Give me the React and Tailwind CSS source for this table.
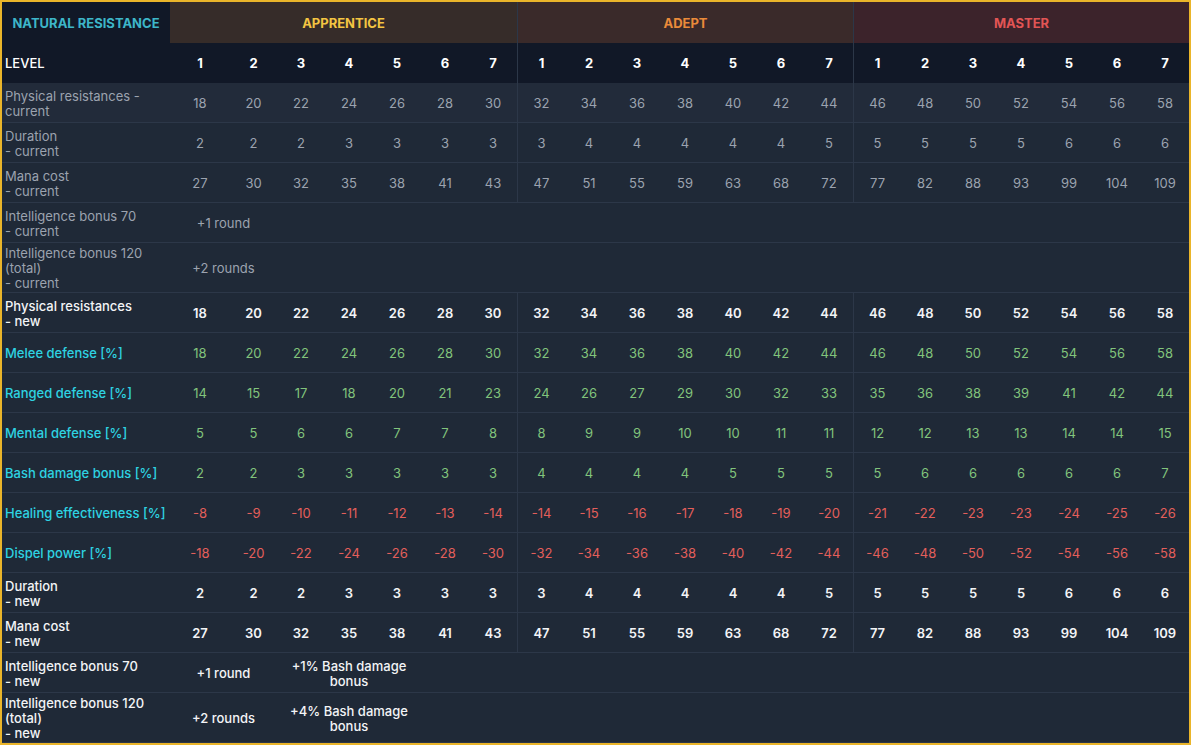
import React from "react";

const phys = [18,20,22,24,26,28,30,32,34,36,38,40,42,44,46,48,50,52,54,56,58];
const dur = [2,2,2,3,3,3,3,3,4,4,4,4,4,5,5,5,5,5,6,6,6];
const mana = [27,30,32,35,38,41,43,47,51,55,59,63,68,72,77,82,88,93,99,104,109];
const ranged = [14,15,17,18,20,21,23,24,26,27,29,30,32,33,35,36,38,39,41,42,44];
const mental = [5,5,6,6,7,7,8,8,9,9,10,10,11,11,12,12,13,13,14,14,15];
const bash = [2,2,3,3,3,3,3,4,4,4,4,5,5,5,5,6,6,6,6,6,7];
const heal = [-8,-9,-10,-11,-12,-13,-14,-14,-15,-16,-17,-18,-19,-20,-21,-22,-23,-23,-24,-25,-26];
const dispel = [-18,-20,-22,-24,-26,-28,-30,-32,-34,-36,-38,-40,-42,-44,-46,-48,-50,-52,-54,-56,-58];

const BORDER = "border-[#2c3748]";

function Label({ lines, color, h, weight, bg }) {
  return (
    <div className={`flex flex-col justify-center pl-[3px] pt-[2px] border-b ${BORDER} ${h} ${color} ${weight} ${bg} leading-[15px]`}>
      {lines.map((l, i) => (
        <span key={i} className="whitespace-nowrap">{l}</span>
      ))}
    </div>
  );
}

function NumRow({ lines, values, labelColor, valueColor, labelWeight, valueWeight, h = "h-[40px]", bg = "bg-[#1f2937]" }) {
  return (
    <>
      <Label lines={lines} color={labelColor} h={h} weight={labelWeight} bg={bg} />
      {values.map((v, i) => (
        <div
          key={i}
          className={`flex items-center justify-center pt-[2px] border-b ${BORDER} ${h} ${bg} ${valueColor} ${valueWeight} ${i === 7 || i === 14 ? `border-l ${BORDER}` : ""}`}
        >
          {v}
        </div>
      ))}
    </>
  );
}

function TextRow({ lines, labelColor, labelWeight, valueColor, valueWeight, a, b, h = "h-[40px]" }) {
  return (
    <>
      <Label lines={lines} color={labelColor} h={h} weight={labelWeight} bg="bg-[#1f2937]" />
      <div className={`col-span-2 flex items-center justify-center text-center pt-[2px] border-b ${BORDER} ${h} bg-[#1f2937] ${valueColor} ${valueWeight} leading-[15px]`}>
        {a}
      </div>
      {b ? (
        <>
          <div className={`col-span-3 flex items-center justify-center text-center px-[8px] pt-[2px] border-b ${BORDER} ${h} bg-[#1f2937] ${valueColor} ${valueWeight} leading-[15px]`}>
            {b}
          </div>
          <div className={`col-span-16 border-b ${BORDER} ${h} bg-[#1f2937]`} />
        </>
      ) : (
        <div className={`col-span-19 border-b ${BORDER} ${h} bg-[#1f2937]`} />
      )}
    </>
  );
}

export default function App() {
  const gray = "text-[#9ca3af]";
  const white = "text-[#f3f4f6]";
  const cyan = "text-[#2ed3e2]";
  const green = "text-[#82c47c]";
  const red = "text-[#e35f5b]";
  const levels = [1,2,3,4,5,6,7,1,2,3,4,5,6,7,1,2,3,4,5,6,7];
  return (
    <div className="w-[1191px] h-[745px] border-2 border-[#eab52a] bg-[#1f2937] overflow-hidden" style={{ fontFamily: "Inter, 'Noto Sans', sans-serif" }}>
      <div className="grid grid-cols-[168px_60px_47px_repeat(19,48px)] text-[13px]">
        {/* header */}
        <div className="h-[41px] pt-[3px] bg-[#111827] flex items-center justify-center font-bold text-[#3db6c9] text-[13px] uppercase">
          Natural Resistance
        </div>
        <div className="col-span-7 h-[41px] pt-[3px] bg-[#362c29] flex items-center justify-center font-bold text-[#f4c542]">APPRENTICE</div>
        <div className={`col-span-7 h-[41px] pt-[3px] bg-[#3a2a2a] flex items-center justify-center font-bold text-[#ea8b3a] border-l ${BORDER}`}>ADEPT</div>
        <div className={`col-span-7 h-[41px] pt-[3px] bg-[#3c232b] flex items-center justify-center font-bold text-[#e25555] border-l ${BORDER}`}>MASTER</div>

        {/* level row */}
        <div className="h-[40px] pt-[2px] bg-[#111827] flex items-center pl-[3px] text-white font-medium">LEVEL</div>
        {levels.map((l, i) => (
          <div key={i} className={`h-[40px] pt-[2px] bg-[#111827] flex items-center justify-center text-white font-bold ${i === 7 || i === 14 ? `border-l ${BORDER}` : ""}`}>{l}</div>
        ))}

        {/* current */}
        <NumRow lines={["Physical resistances -", "current"]} values={phys} labelColor={gray} valueColor={gray} bg="bg-[#222b3a]" />
        <NumRow lines={["Duration", "- current"]} values={dur} labelColor={gray} valueColor={gray} />
        <NumRow lines={["Mana cost", "- current"]} values={mana} labelColor={gray} valueColor={gray} />
        <TextRow lines={["Intelligence bonus 70", "- current"]} labelColor={gray} valueColor={gray} a="+1 round" />
        <TextRow lines={["Intelligence bonus 120", "(total)", "- current"]} labelColor={gray} valueColor={gray} a="+2 rounds" h="h-[50px]" />

        {/* new */}
        <NumRow lines={["Physical resistances", "- new"]} values={phys} labelColor={white} valueColor={white} labelWeight="font-medium" valueWeight="font-semibold" />
        <NumRow lines={["Melee defense [%]"]} values={phys} labelColor={cyan} valueColor={green} labelWeight="font-medium" />
        <NumRow lines={["Ranged defense [%]"]} values={ranged} labelColor={cyan} valueColor={green} labelWeight="font-medium" />
        <NumRow lines={["Mental defense [%]"]} values={mental} labelColor={cyan} valueColor={green} labelWeight="font-medium" />
        <NumRow lines={["Bash damage bonus [%]"]} values={bash} labelColor={cyan} valueColor={green} labelWeight="font-medium" />
        <NumRow lines={["Healing effectiveness [%]"]} values={heal} labelColor={cyan} valueColor={red} labelWeight="font-medium" />
        <NumRow lines={["Dispel power [%]"]} values={dispel} labelColor={cyan} valueColor={red} labelWeight="font-medium" />
        <NumRow lines={["Duration", "- new"]} values={dur} labelColor={white} valueColor={white} labelWeight="font-medium" valueWeight="font-semibold" />
        <NumRow lines={["Mana cost", "- new"]} values={mana} labelColor={white} valueColor={white} labelWeight="font-medium" valueWeight="font-semibold" />
        <TextRow lines={["Intelligence bonus 70", "- new"]} labelColor={white} labelWeight="font-medium" valueColor={white} valueWeight="font-medium" a="+1 round" b="+1% Bash damage bonus" />
        <TextRow lines={["Intelligence bonus 120", "(total)", "- new"]} labelColor={white} labelWeight="font-medium" valueColor={white} valueWeight="font-medium" a="+2 rounds" b="+4% Bash damage bonus" h="h-[50px]" />
      </div>
    </div>
  );
}
